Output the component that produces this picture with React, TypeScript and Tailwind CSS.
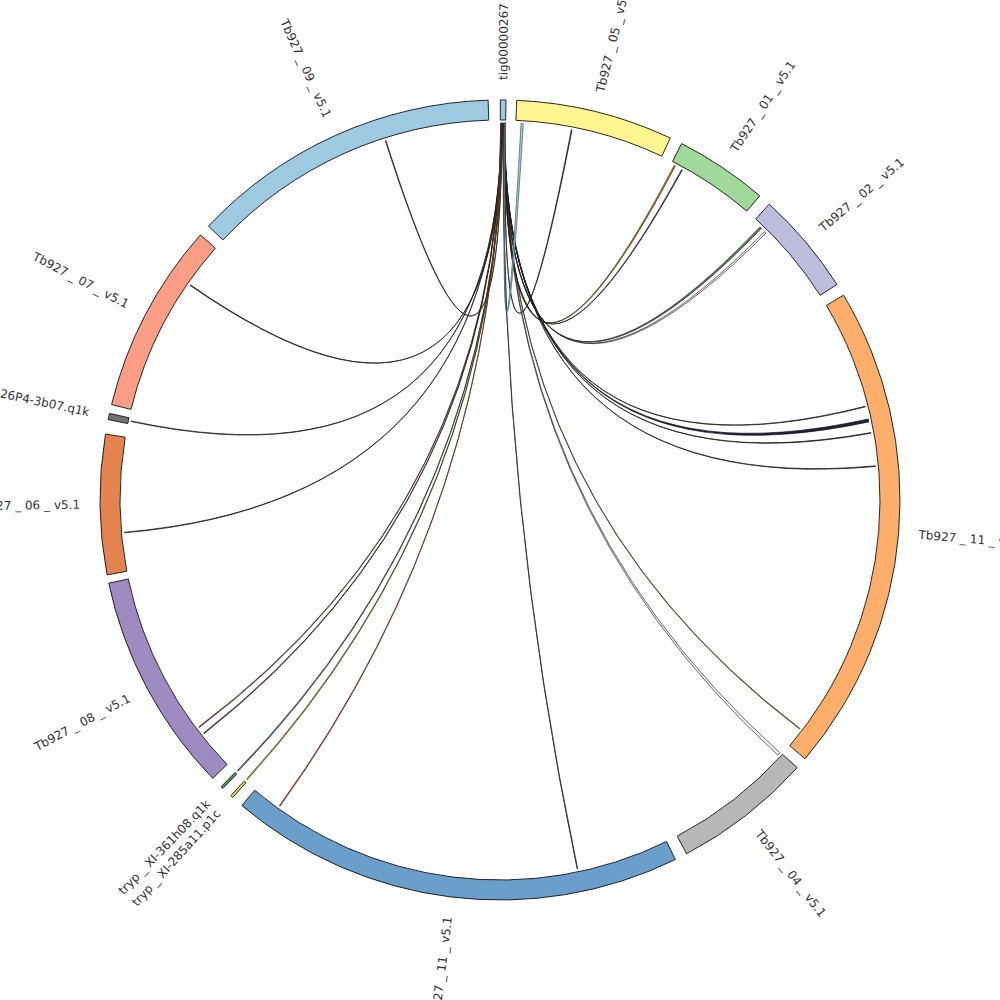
import React from "react";

const CX = 500;
const CY = 500;
const R_IN = 380;
const R_OUT = 400;
const R_LINK = 377;
const R_LABEL = 420;

type Seg = { a: number; b: number; fill: string; label: string };

const segs: Seg[] = [
  { a: 0.05, b: 0.86, fill: "#9ecae1", label: "tig00000267" },
  { a: 2.4, b: 25.2, fill: "#fff68f", label: "Tb927 _ 05 _ v5.1" },
  { a: 27.0, b: 40.5, fill: "#a1d99b", label: "Tb927 _ 01 _ v5.1" },
  { a: 42.3, b: 57.4, fill: "#bcbddc", label: "Tb927 _ 02 _ v5.1" },
  { a: 59.2, b: 130.3, fill: "#fdae6b", label: "Tb927 _ 11 _ v5.1" },
  { a: 132.0, b: 152.2, fill: "#b7b7b7", label: "Tb927 _ 04 _ v5.1" },
  { a: 154.0, b: 220.2, fill: "#6a9ecb", label: "Tb927 _ 11 _ v5.1" },
  { a: 221.95, b: 222.3, fill: "#e8e04a", label: "tryp _ XI-285a11.p1c" },
  { a: 223.85, b: 224.2, fill: "#4f9a55", label: "tryp _ XI-361h08.q1k" },
  { a: 225.9, b: 258.0, fill: "#9e8bc2", label: "Tb927 _ 08 _ v5.1" },
  { a: 259.2, b: 279.5, fill: "#e6844f", label: "Tb927 _ 06 _ v5.1" },
  { a: 281.6, b: 282.5, fill: "#737373", label: "tryp _ XI-26P4-3b07.q1k" },
  { a: 283.8, b: 311.5, fill: "#fc9d85", label: "Tb927 _ 07 _ v5.1" },
  { a: 313.2, b: 358.3, fill: "#9ecae1", label: "Tb927 _ 09 _ v5.1" },
];

// [source angle, source width, target angle, target width, fill, stroke]
type Link = [number, number, number, number, string, string];

const links: Link[] = [
  [0.3, 0.05, 342.3, 0.1, "#5a2a1a", "#2a1a14"],
  [0.25, 0.05, 304.7, 0.1, "#333344", "#1e1e1e"],
  [0.2, 0.05, 282.0, 0.1, "#333344", "#1e1e1e"],
  [0.22, 0.05, 265.0, 0.1, "#2f3d4a", "#1e1e1e"],
  [0.15, 0.05, 232.9, 0.12, "#8a4a2a", "#3a2418"],
  [0.18, 0.05, 231.7, 0.12, "#5a3a2a", "#2a2018"],
  [0.35, 0.06, 224.0, 0.15, "#4f9a55", "#1e2a1e"],
  [0.4, 0.06, 222.1, 0.15, "#e8e04a", "#2a2a14"],
  [0.1, 0.06, 215.7, 0.12, "#a0522d", "#5a2a14"],
  [0.45, 0.05, 168.1, 0.1, "#2f3d4a", "#1e2a2a"],
  [0.55, 0.08, 132.1, 0.45, "#ffffff", "#1e1e1e"],
  [0.6, 0.05, 127.3, 0.1, "#8a7a2a", "#3a3418"],
  [0.62, 0.05, 75.6, 0.1, "#4a6a4a", "#1e1e1e"],
  [0.65, 0.1, 77.6, 0.45, "#20203a", "#141420"],
  [0.68, 0.05, 79.7, 0.1, "#333344", "#1e1e1e"],
  [0.7, 0.05, 84.8, 0.1, "#333344", "#1e1e1e"],
  [0.72, 0.06, 43.6, 0.3, "#4f8a4a", "#1e1e1e"],
  [0.74, 0.05, 44.6, 0.3, "#ffffff", "#1e1e1e"],
  [0.76, 0.05, 27.5, 0.2, "#c89a2a", "#3a2a14"],
  [0.78, 0.05, 28.8, 0.12, "#333333", "#1e1e1e"],
  [0.8, 0.05, 10.9, 0.12, "#3a3a20", "#1e1e14"],
  [0.72, 0.12, 3.2, 0.35, "#9ecae1", "#3d5a70"],
];

function pt(deg: number, r: number): [number, number] {
  const t = (deg * Math.PI) / 180;
  return [CX + r * Math.sin(t), CY - r * Math.cos(t)];
}

function f(p: [number, number]) {
  return `${p[0].toFixed(2)} ${p[1].toFixed(2)}`;
}

function sectorPath(a: number, b: number) {
  const large = b - a > 180 ? 1 : 0;
  return [
    `M ${f(pt(a, R_OUT))}`,
    `A ${R_OUT} ${R_OUT} 0 ${large} 1 ${f(pt(b, R_OUT))}`,
    `L ${f(pt(b, R_IN))}`,
    `A ${R_IN} ${R_IN} 0 ${large} 0 ${f(pt(a, R_IN))}`,
    "Z",
  ].join(" ");
}

function ribbonPath(l: Link) {
  const [s, sw, t, tw] = l;
  const s1 = s;
  const s2 = s + sw;
  const t1 = t;
  const t2 = t + tw;
  const c = `${CX} ${CY}`;
  return [
    `M ${f(pt(s1, R_LINK))}`,
    `Q ${c} ${f(pt(t2, R_LINK))}`,
    `L ${f(pt(t1, R_LINK))}`,
    `Q ${c} ${f(pt(s2, R_LINK))}`,
    "Z",
  ].join(" ");
}

function Label({ seg }: { seg: Seg }) {
  const mid = (seg.a + seg.b) / 2;
  const [x, y] = pt(mid, R_LABEL);
  const right = mid < 180;
  const rot = right ? mid - 90 : mid + 90;
  return (
    <text
      x={0}
      y={0}
      transform={`translate(${x.toFixed(2)} ${y.toFixed(2)}) rotate(${rot.toFixed(2)})`}
      textAnchor={right ? "start" : "end"}
      dominantBaseline="central"
      fontSize={12}
      fill="#333333"
      style={{ fontFamily: '"DejaVu Sans", Verdana, sans-serif' }}
    >
      {seg.label}
    </text>
  );
}

export default function App() {
  return (
    <div className="w-[1000px] h-[1000px] bg-white overflow-hidden">
      <svg width={1000} height={1000} viewBox="0 0 1000 1000" className="block">
        <g>
          {links.map((l, i) => (
            <path
              key={i}
              d={ribbonPath(l)}
              fill={l[4]}
              stroke={l[5]}
              strokeWidth={0.7}
              strokeLinejoin="round"
            />
          ))}
        </g>
        <g>
          {segs.map((s, i) => (
            <path
              key={i}
              d={sectorPath(s.a, s.b)}
              fill={s.fill}
              stroke="#111111"
              strokeWidth={0.9}
            />
          ))}
        </g>
        <g>
          {segs.map((s, i) => (
            <Label key={i} seg={s} />
          ))}
        </g>
      </svg>
    </div>
  );
}
